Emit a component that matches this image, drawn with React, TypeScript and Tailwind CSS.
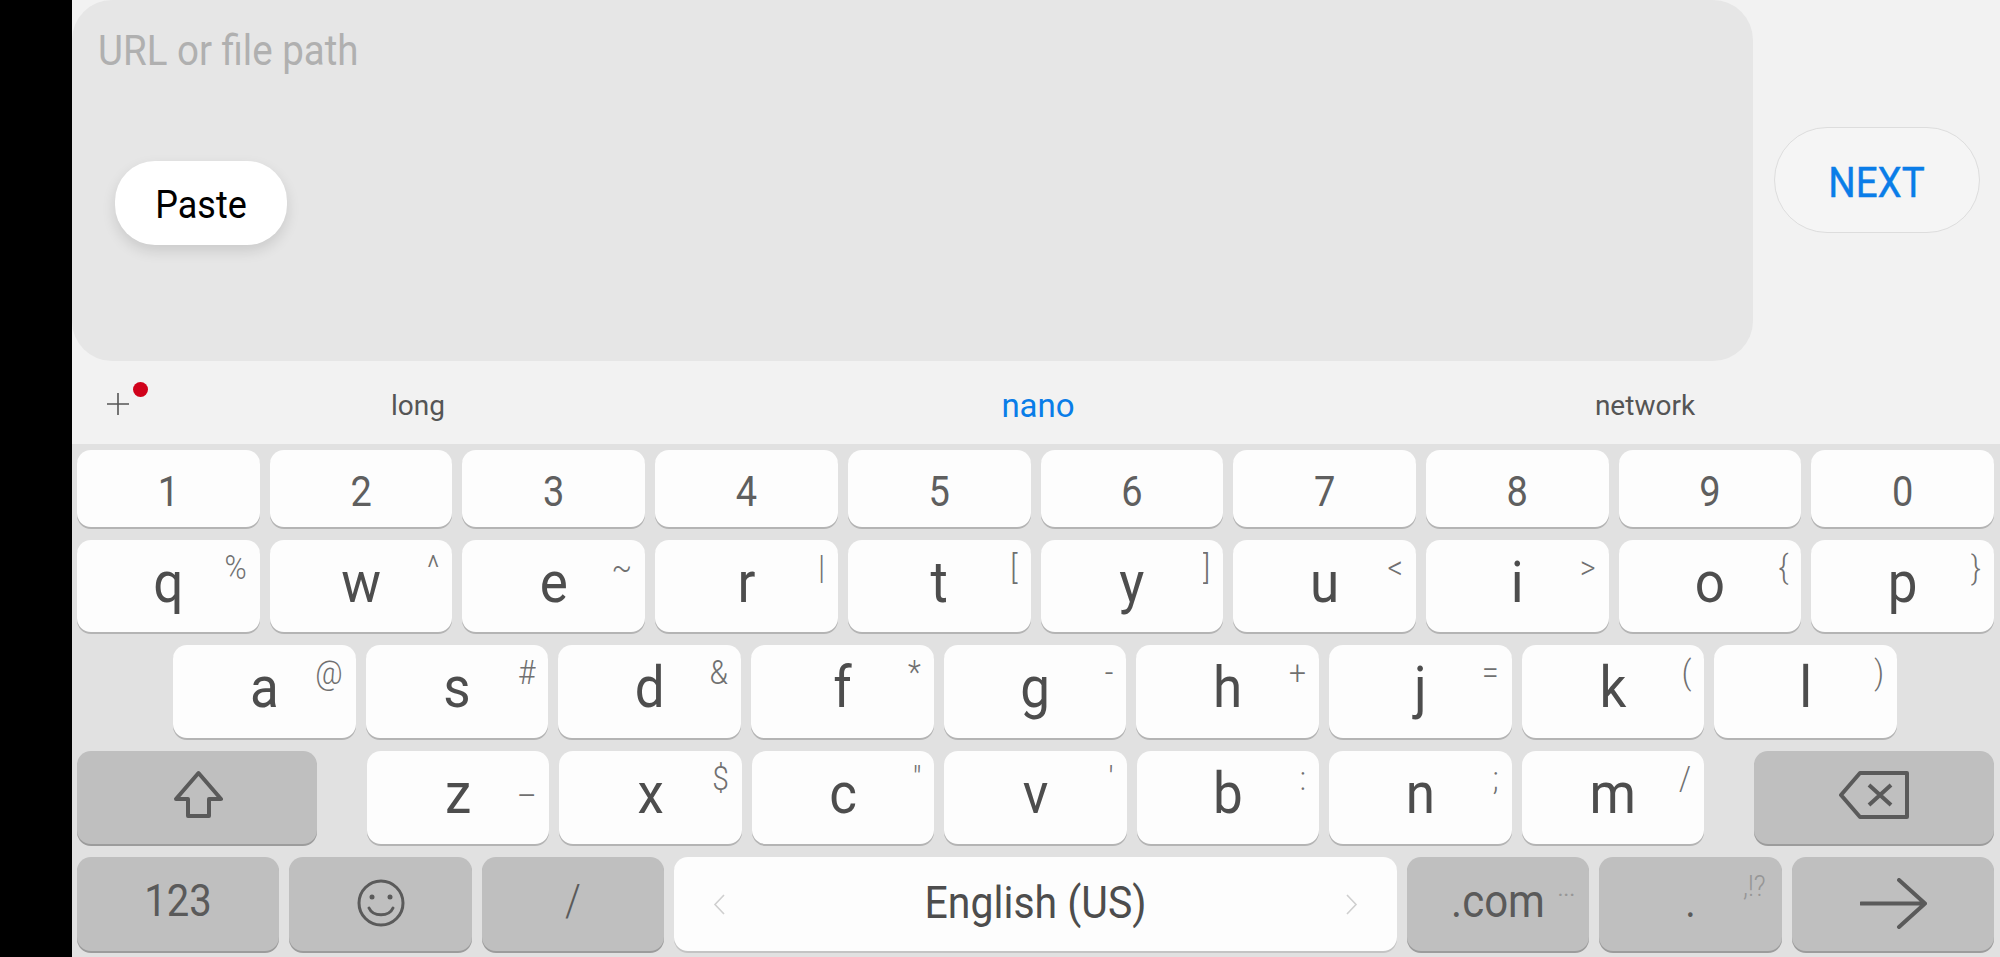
const numberRow = ["1", "2", "3", "4", "5", "6", "7", "8", "9", "0"];

const topRow = [
  ["q", "%"],
  ["w", "^"],
  ["e", "~"],
  ["r", "|"],
  ["t", "["],
  ["y", "]"],
  ["u", "<"],
  ["i", ">"],
  ["o", "{"],
  ["p", "}"],
];

const homeRow = [
  ["a", "@"],
  ["s", "#"],
  ["d", "&"],
  ["f", "*"],
  ["g", "-"],
  ["h", "+"],
  ["j", "="],
  ["k", "("],
  ["l", ")"],
];

const bottomRow = [
  ["z", "–"],
  ["x", "$"],
  ["c", '"'],
  ["v", "'"],
  ["b", ":"],
  ["n", ";"],
  ["m", "/"],
];

function LetterKey({ label, hint }: { label: string; hint: string }) {
  return (
    <div className="relative flex-1 flex items-center justify-center rounded-[14px] bg-[#fdfdfd] shadow-[0_2px_0_#b4b4b4]">
      <span className="inline-block -translate-y-[4px] scale-y-110 text-[53px] leading-none text-[#4d4d4d]">
        {label}
      </span>
      <span
        className={`absolute right-[13px] scale-y-110 text-right text-[30px] font-light leading-[32px] text-[#707070] ${
          label === "z" ? "top-[29px]" : "top-[12px]"
        }`}
      >
        {hint}
      </span>
    </div>
  );
}

function DarkKey({ className, children }: { className: string; children: React.ReactNode }) {
  return (
    <div
      className={`relative flex items-center justify-center rounded-[14px] bg-[#bfbfbf] text-[#5a5a5a] shadow-[0_2px_0_#9c9c9c] ${className}`}
    >
      {children}
    </div>
  );
}

export default function App() {
  return (
    <div className="flex h-[957px] w-[2000px] overflow-hidden bg-black font-['Roboto',sans-serif]">
      <div className="w-[72px] shrink-0" />
      <div className="flex flex-1 flex-col">
        <div className="flex h-[361px] bg-[#f2f2f2]">
          <div className="relative h-[361px] w-[1681px] rounded-[40px] bg-[#e6e6e6]">
            <div className="absolute left-[26px] top-[26px] scale-y-110 origin-top text-[38.5px] leading-[44px] text-[#b0b0b0]">
              URL or file path
            </div>
            <button
              type="button"
              className="absolute left-[43px] top-[161px] flex h-[84px] w-[172px] items-center justify-center rounded-[40px] bg-white text-[36px] text-black shadow-[0_6px_14px_rgba(0,0,0,0.12)]"
            >
              <span className="inline-block translate-y-[2px] scale-y-110">Paste</span>
            </button>
          </div>
          <div className="flex flex-1 items-start justify-center pt-[127px]">
            <button
              type="button"
              className="flex h-[106px] w-[206px] items-center justify-center rounded-full border border-[#dddddd] bg-[#f5f5f5] text-[38.5px] text-[#0a7de8]"
            >
              <span className="inline-block translate-y-[3px] scale-y-110 [-webkit-text-stroke:0.4px_#0a7de8]">NEXT</span>
            </button>
          </div>
        </div>

        <div className="flex h-[84.5px] items-center bg-[#f2f2f2] pt-[6px] text-[28px] leading-none">
          <div className="relative h-full w-[36px] shrink-0">
            <svg className="absolute left-[35px] top-[26px]" width="22" height="22" viewBox="0 0 22 22">
              <path d="M11 0V22M0 11H22" stroke="#555555" strokeWidth="1.6" fill="none" />
            </svg>
            <div className="absolute left-[61px] top-[15px] h-[15px] w-[15px] rounded-full bg-[#d0021b]" />
          </div>
          <div className="flex w-[620px] justify-center text-[#555555]">long</div>
          <div className="flex w-[620px] justify-center text-[33px] text-[#0a7de8]">nano</div>
          <div className="flex w-[594px] justify-center text-[#555555]">network</div>
        </div>

        <div className="flex flex-1 flex-col gap-[13px] bg-[#e1e1e1] pb-[6px] pl-[5px] pr-[6px] pt-[6px]">
          <div className="flex h-[77px] gap-[10px]">
            {numberRow.map((digit) => (
              <div
                key={digit}
                className="flex flex-1 items-center justify-center rounded-[14px] bg-[#fdfdfd] shadow-[0_2px_0_#b4b4b4]"
              >
                <span className="inline-block translate-y-[3px] scale-y-110 text-[38px] leading-none text-[#5f5f5f]">
                  {digit}
                </span>
              </div>
            ))}
          </div>

          <div className="flex h-[92px] gap-[10px]">
            {topRow.map(([label, hint]) => (
              <LetterKey key={label} label={label} hint={hint} />
            ))}
          </div>

          <div className="flex h-[93px] gap-[10px] pl-[96px] pr-[97px]">
            {homeRow.map(([label, hint]) => (
              <LetterKey key={label} label={label} hint={hint} />
            ))}
          </div>

          <div className="flex h-[93px] gap-[10px]">
            <DarkKey className="mr-[40px] w-[240px] shrink-0">
              <svg className="-translate-y-[4px] translate-x-[1px]" width="49" height="48" viewBox="0 0 49 48" fill="none">
                <path
                  d="M24.5 3 L47 29 H35 V46 H14 V29 H2 Z"
                  stroke="#5a5a5a"
                  strokeWidth="4"
                  strokeLinejoin="round"
                />
              </svg>
            </DarkKey>
            {bottomRow.map(([label, hint]) => (
              <LetterKey key={label} label={label} hint={hint} />
            ))}
            <DarkKey className="ml-[40px] w-[240px] shrink-0">
              <svg className="-translate-y-[3px]" width="70" height="48" viewBox="0 0 70 48" fill="none">
                <path
                  d="M21 2 H68 V46 H21 L2 24 Z"
                  stroke="#5a5a5a"
                  strokeWidth="4"
                  strokeLinejoin="round"
                />
                <path d="M30 14 L52 34 M52 14 L30 34" stroke="#5a5a5a" strokeWidth="4" />
              </svg>
            </DarkKey>
          </div>

          <div className="flex h-[94px] gap-[10px]">
            <DarkKey className="w-[202px] shrink-0">
              <span className="inline-block -translate-y-[2px] scale-y-110 text-[40px] leading-none">123</span>
            </DarkKey>
            <DarkKey className="w-[183px] shrink-0">
              <svg className="-translate-y-[1px]" width="48" height="48" viewBox="0 0 48 48" fill="none" stroke="#5a5a5a" strokeWidth="3">
                <circle cx="24" cy="24" r="22" />
                <circle cx="15" cy="18" r="2.5" fill="#5a5a5a" stroke="none" />
                <circle cx="33" cy="18" r="2.5" fill="#5a5a5a" stroke="none" />
                <path d="M12 29 C16 38 32 38 36 29" strokeLinecap="round" />
              </svg>
            </DarkKey>
            <DarkKey className="w-[182px] shrink-0">
              <span className="inline-block -translate-y-[2px] scale-y-110 text-[40px] font-light leading-none">/</span>
            </DarkKey>
            <div className="flex flex-1 items-center justify-between rounded-[14px] bg-[#fdfdfd] px-[39px] shadow-[0_2px_0_#c4c4c4]">
              <svg width="12" height="21" viewBox="0 0 12 21" fill="none">
                <path d="M11 1 L2 10.5 L11 20" stroke="#cfcfcf" strokeWidth="1.6" />
              </svg>
              <span className="inline-block -translate-y-[1px] scale-y-110 text-[41px] leading-none text-[#4d4d4d]">
                English (US)
              </span>
              <svg width="12" height="21" viewBox="0 0 12 21" fill="none">
                <path d="M1 1 L10 10.5 L1 20" stroke="#cfcfcf" strokeWidth="1.6" />
              </svg>
            </div>
            <DarkKey className="w-[182px] shrink-0">
              <span className="inline-block -translate-y-[2px] scale-y-110 text-[42px] leading-none">.com</span>
              <span className="absolute left-[151px] top-[30px] text-[16px] font-bold leading-none tracking-[1px] text-[#969696]">
                ···
              </span>
            </DarkKey>
            <DarkKey className="w-[183px] shrink-0">
              <span className="inline-block -translate-y-[1px] scale-y-110 text-[40px] leading-none">.</span>
              <span className="absolute left-[144px] top-[16px] scale-y-110 text-[26px] font-light leading-none text-[#969696]">
                ,!?
              </span>
            </DarkKey>
            <DarkKey className="w-[202px] shrink-0">
              <svg className="-translate-y-[1px]" width="67" height="51" viewBox="0 0 67 51" fill="none">
                <path
                  d="M1 25.5 H65 M39 2 L65 25.5 L39 49"
                  stroke="#5a5a5a"
                  strokeWidth="4"
                  strokeLinecap="round"
                  strokeLinejoin="round"
                />
              </svg>
            </DarkKey>
          </div>
        </div>
      </div>
    </div>
  );
}
